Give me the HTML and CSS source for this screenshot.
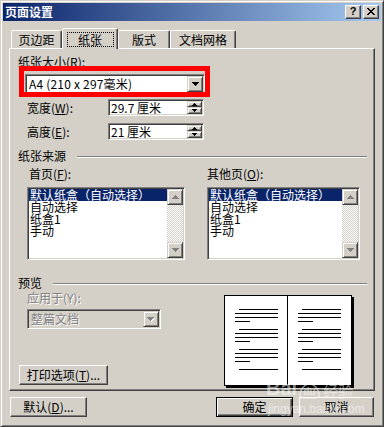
FILE: index.html
```html
<!DOCTYPE html>
<html lang="zh-CN">
<head>
<meta charset="utf-8">
<title>页面设置</title>
<link rel="stylesheet" href="styles.css">
</head>
<body>
<div class="window">
  <div class="titlebar">
    <span class="title">页面设置</span>
    <div class="tbtn"><span class="q">?</span></div>
    <div class="tbtn close">
      <svg width="8" height="7" viewBox="0 0 8 7" shape-rendering="crispEdges"><path d="M0 0h2v1H0zM6 0h2v1H6zM1 1h2v1H1zM5 1h2v1H5zM2 2h4v1H2zM3 3h2v1H3zM2 4h4v1H2zM1 5h2v1H1zM5 5h2v1H5zM0 6h2v1H0zM6 6h2v1H6z"/></svg>
    </div>
  </div>

  <div class="body">
    <div class="tabs">
      <div class="tab t1">页边距</div>
      <div class="tab t2 sel"><span class="focus">纸张</span></div>
      <div class="tab t3">版式</div>
      <div class="tab t4">文档网格</div>
    </div>

    <div class="panel">
      <div class="lbl l-size">纸张大小(<u>R</u>):</div>
      <div class="combo a4 sunken">
        <span class="cval">A4 (210 x 297毫米)</span>
        <div class="cbtn"><svg width="7" height="4" viewBox="0 0 7 4" shape-rendering="crispEdges"><path d="M0 0h7v1H6v1H5v1H4v1H3V3H2V2H1V1H0z"/></svg></div>
      </div>

      <div class="frow first">
        <span class="flbl">宽度(<u>W</u>):</span>
        <div class="spin sunken">
          <span class="sval">29.7 厘米</span>
          <div class="sbtns">
            <div class="sb up"><svg width="5" height="3" viewBox="0 0 5 3" shape-rendering="crispEdges"><path d="M2 0h1v1h1v1h1v1H0V2h1V1h1z"/></svg></div>
            <div class="sb dn"><svg width="5" height="3" viewBox="0 0 5 3" shape-rendering="crispEdges"><path d="M0 0h5v1H4v1H3v1H2V2H1V1H0z"/></svg></div>
          </div>
        </div>
      </div>
      <div class="frow second">
        <span class="flbl">高度(<u>E</u>):</span>
        <div class="spin sunken">
          <span class="sval">21 厘米</span>
          <div class="sbtns">
            <div class="sb up"><svg width="5" height="3" viewBox="0 0 5 3" shape-rendering="crispEdges"><path d="M2 0h1v1h1v1h1v1H0V2h1V1h1z"/></svg></div>
            <div class="sb dn"><svg width="5" height="3" viewBox="0 0 5 3" shape-rendering="crispEdges"><path d="M0 0h5v1H4v1H3v1H2V2H1V1H0z"/></svg></div>
          </div>
        </div>
      </div>

      <div class="group g-src"><span>纸张来源</span><span class="gline"></span></div>

      <div class="src">
        <div class="lbl l-first">首页(<u>F</u>):</div>
        <div class="lbl l-other">其他页(<u>O</u>):</div>
        <div class="list sunken w1">
          <div class="items">
            <div class="item sel">默认纸盒（自动选择）</div>
            <div class="item">自动选择</div>
            <div class="item">纸盒1</div>
            <div class="item">手动</div>
          </div>
          <div class="vscroll">
            <div class="sbtn"><svg width="7" height="4" viewBox="0 0 7 4" shape-rendering="crispEdges"><path d="M3 0h1v1h1v1h1v1h1v1H0V3h1V2h1V1h1z"/></svg></div>
            <div class="track"></div>
            <div class="sbtn"><svg width="7" height="4" viewBox="0 0 7 4" shape-rendering="crispEdges"><path d="M0 0h7v1H6v1H5v1H4v1H3V3H2V2H1V1H0z"/></svg></div>
          </div>
        </div>
        <div class="list sunken w2">
          <div class="items">
            <div class="item sel">默认纸盒（自动选择）</div>
            <div class="item">自动选择</div>
            <div class="item">纸盒1</div>
            <div class="item">手动</div>
          </div>
          <div class="vscroll">
            <div class="sbtn"><svg width="7" height="4" viewBox="0 0 7 4" shape-rendering="crispEdges"><path d="M3 0h1v1h1v1h1v1h1v1H0V3h1V2h1V1h1z"/></svg></div>
            <div class="track"></div>
            <div class="sbtn"><svg width="7" height="4" viewBox="0 0 7 4" shape-rendering="crispEdges"><path d="M0 0h7v1H6v1H5v1H4v1H3V3H2V2H1V1H0z"/></svg></div>
          </div>
        </div>
      </div>

      <div class="group g-prev"><span>预览</span><span class="gline"></span></div>

      <div class="prev">
        <div class="pleft">
          <div class="lbl dis l-apply">应用于(Y):</div>
          <div class="combo dcombo sunken">
            <span class="cval dis">整篇文档</span>
            <div class="cbtn"><svg width="8" height="5" viewBox="0 0 8 5" shape-rendering="crispEdges"><path fill="#fff" d="M1 1h7v1H7v1H6v1H5v1H4V4H3V3H2V2H1z"/><path fill="#808080" d="M0 0h7v1H6v1H5v1H4v1H3V3H2V2H1V1H0z"/></svg></div>
          </div>
          <div class="btn print">打印选项(<u>T</u>)...</div>
        </div>
        <svg class="book" width="130" height="93" viewBox="0 0 130 93" shape-rendering="crispEdges">
          <rect x="2" y="2" width="128" height="91" fill="#000"/>
          <rect x="0.5" y="0.5" width="127" height="90" fill="#fff" stroke="#000"/>
          <line x1="63.5" y1="0" x2="63.5" y2="91" stroke="#000"/>
          <g stroke="#000">
            <line x1="15" y1="14.5" x2="54" y2="14.5"/><line x1="11" y1="18.5" x2="54" y2="18.5"/><line x1="11" y1="22.5" x2="54" y2="22.5"/><line x1="11" y1="26.5" x2="26" y2="26.5"/>
            <line x1="15" y1="34.5" x2="54" y2="34.5"/><line x1="11" y1="38.5" x2="54" y2="38.5"/><line x1="11" y1="42.5" x2="54" y2="42.5"/><line x1="11" y1="46.5" x2="26" y2="46.5"/>
            <line x1="15" y1="54.5" x2="54" y2="54.5"/><line x1="11" y1="58.5" x2="54" y2="58.5"/><line x1="11" y1="62.5" x2="54" y2="62.5"/><line x1="11" y1="66.5" x2="26" y2="66.5"/>
            <line x1="15" y1="74.5" x2="54" y2="74.5"/>
            <line x1="78" y1="14.5" x2="117" y2="14.5"/><line x1="74" y1="18.5" x2="117" y2="18.5"/><line x1="74" y1="22.5" x2="117" y2="22.5"/><line x1="74" y1="26.5" x2="89" y2="26.5"/>
            <line x1="78" y1="34.5" x2="117" y2="34.5"/><line x1="74" y1="38.5" x2="117" y2="38.5"/><line x1="74" y1="42.5" x2="117" y2="42.5"/><line x1="74" y1="46.5" x2="89" y2="46.5"/>
            <line x1="78" y1="54.5" x2="117" y2="54.5"/><line x1="74" y1="58.5" x2="117" y2="58.5"/><line x1="74" y1="62.5" x2="117" y2="62.5"/><line x1="74" y1="66.5" x2="89" y2="66.5"/>
            <line x1="78" y1="74.5" x2="117" y2="74.5"/>
          </g>
        </svg>
      </div>

      <div class="redbox"></div>
    </div>

    <div class="footer">
      <div class="btn b-def">默认(<u>D</u>)...</div>
      <div class="btn b-ok">确定</div>
      <div class="btn b-cancel">取消</div>
    </div>
  </div>

  <div class="wm">
    <div class="wm-top">
      <span class="wm-bai">Bai</span>
      <svg class="wm-paw" width="24" height="26" viewBox="0 0 24 26">
        <g fill="none" stroke="#fff" stroke-width="1.6">
          <ellipse cx="5" cy="6" rx="2.5" ry="3.2"/>
          <ellipse cx="10" cy="3.5" rx="2.5" ry="3"/>
          <ellipse cx="15" cy="3.5" rx="2.5" ry="3"/>
          <ellipse cx="20" cy="6" rx="2.5" ry="3.2"/>
          <path d="M3 22c0-6 5-11 9.5-11S22 16 22 22c0 2-2 3-4 3H7c-2 0-4-1-4-3z"/>
        </g>
        <text x="12.5" y="22" text-anchor="middle" fill="#fff" font-family="Liberation Sans, sans-serif" font-weight="700" font-size="10">du</text>
      </svg>
      <span class="wm-jy">经验</span>
    </div>
    <div class="wm-url">jingyan.baidu.com</div>
  </div>
</div>
</body>
</html>
```

FILE: styles.css
```css
* { box-sizing: border-box; }
html, body { margin: 0; padding: 0; }
body {
  width: 384px;
  height: 427px;
  overflow: hidden;
  font-family: "Noto Sans CJK SC", "Noto Sans", sans-serif;
  font-size: 12px;
  line-height: 12px;
  color: #000;
  background: #d4d0c8;
}
u { text-decoration: underline; text-underline-offset: 1px; }

.sunken {
  border: 1px solid;
  border-color: #808080 #fff #fff #808080;
  box-shadow: inset 1px 1px #404040, inset -1px -1px #d4d0c8;
  padding: 1px;
}

.window {
  position: relative;
  width: 384px;
  height: 427px;
  background: #d4d0c8;
  border: 1px solid;
  border-color: #d4d0c8 #404040 #404040 #d4d0c8;
  box-shadow: inset 1px 1px #fff, inset -1px -1px #808080;
  padding: 2px;
  display: flex;
  flex-direction: column;
}

/* title bar */
.titlebar {
  flex: none;
  height: 18px;
  display: flex;
  align-items: center;
  padding: 0 2px 0 2px;
  background: linear-gradient(to right, #0a246a, #a6caf0);
}
.title {
  flex: 1;
  color: #fff;
  font-weight: 700;
  font-size: 12px;
  line-height: 14px;
}
.tbtn {
  width: 16px;
  height: 14px;
  background: #d4d0c8;
  border: 1px solid;
  border-color: #fff #404040 #404040 #fff;
  box-shadow: inset -1px -1px #808080;
  display: flex;
  align-items: center;
  justify-content: center;
}
.tbtn + .tbtn { margin-left: 2px; }
.q {
  font-family: "Liberation Sans", sans-serif;
  font-weight: 700;
  font-size: 11px;
  line-height: 11px;
  margin-top: -1px;
}
.close svg { display: block; margin-top: -1px; }

/* body */
.body {
  flex: 1;
  display: flex;
  flex-direction: column;
  padding: 7px 6px 0 6px;
}

/* tabs */
.tabs {
  flex: none;
  height: 20px;
  display: flex;
  align-items: flex-end;
  margin-left: 2px;
  position: relative;
  z-index: 2;
}
.tab {
  height: 18px;
  border: 1px solid;
  border-bottom: 0;
  border-color: #fff #404040 transparent #fff;
  box-shadow: inset -1px 0 #808080;
  border-radius: 2px 2px 0 0;
  background: #d4d0c8;
  display: flex;
  align-items: center;
  justify-content: center;
  padding-top: 1px;
}
.t1 { width: 51px; }
.t2 { width: 56px; }
.t3 { width: 52px; }
.t4 { width: 66px; }
.tab.sel {
  height: 21px;
  margin-bottom: -1px;
  align-items: flex-start;
  padding-top: 3px;
}
.focus {
  width: 47px;
  height: 15px;
  border: 1px dotted #000;
  display: flex;
  align-items: center;
  justify-content: center;
}

/* panel */
.panel {
  position: relative;
  flex: none;
  width: 366px;
  height: 343px;
  border: 1px solid;
  border-color: #fff #404040 #404040 #fff;
  box-shadow: inset -1px -1px #808080;
  display: flex;
  flex-direction: column;
  align-items: flex-start;
}
.lbl { line-height: 12px; white-space: nowrap; }
.dis { color: #808080; text-shadow: 1px 1px 0 #fff; }
.l-size { margin: 7px 0 0 8px; }

.combo {
  height: 20px;
  background: #fff;
  display: flex;
  align-items: center;
}
.a4 { width: 180px; margin: 6px 0 0 15px; }
.cval { flex: 1; padding-left: 2px; white-space: nowrap; }
.a4 .cval { letter-spacing: 0.2px; }
.cbtn {
  width: 16px;
  height: 16px;
  border: 1px solid;
  border-color: #d4d0c8 #404040 #404040 #d4d0c8;
  box-shadow: inset 1px 1px #fff, inset -1px -1px #808080;
  background: #d4d0c8;
  display: flex;
  align-items: center;
  justify-content: center;
}
.cbtn svg { display: block; }

.frow {
  display: flex;
  align-items: center;
  margin-left: 17px;
}
.frow.first { margin-top: 5px; }
.frow.second { margin-top: 7px; }
.flbl { width: 81px; white-space: nowrap; }
.spin {
  width: 96px;
  height: 17px;
  background: #fff;
  display: flex;
  align-items: center;
}
.sval { flex: 1; padding-left: 1px; white-space: nowrap; }
.sbtns {
  width: 15px;
  height: 13px;
  display: flex;
  flex-direction: column;
}
.sb {
  flex: 1;
  border: 1px solid;
  border-color: #d4d0c8 #404040 #404040 #d4d0c8;
  box-shadow: inset 1px 1px #fff, inset -1px -1px #808080;
  background: #d4d0c8;
  display: flex;
  align-items: center;
  justify-content: center;
}
.sb.up { flex: 0 0 6px; }
.sb.dn { flex: 0 0 7px; }
.sb svg { display: block; flex: none; }

/* group headers */
.group {
  display: flex;
  align-self: stretch;
  height: 12px;
  margin-left: 8px;
  white-space: nowrap;
}
.gline {
  flex: 1;
  height: 2px;
  margin: 6px 7px 0 11px;
  border-top: 1px solid #808080;
  border-bottom: 1px solid #fff;
}
.g-src { margin-top: 10px; }
.g-prev { margin-top: 17px; }

/* paper source */
.src {
  margin: 6px 0 0 17px;
  display: grid;
  grid-template-columns: 180px 153px;
  row-gap: 7px;
}
.l-first { padding-left: 2px; }
.list {
  height: 73px;
  background: #fff;
  display: flex;
}
.list.w1 { width: 158px; }
.list.w2 { width: 153px; }
.items { flex: 1; min-width: 0; }
.item {
  height: 12px;
  line-height: 12px;
  padding-left: 1px;
  white-space: nowrap;
}
.item.sel { background: #0a246a; color: #fff; }
.vscroll {
  width: 16px;
  display: flex;
  flex-direction: column;
}
.sbtn {
  flex: 0 0 16px;
  border: 1px solid;
  border-color: #d4d0c8 #404040 #404040 #d4d0c8;
  box-shadow: inset 1px 1px #fff, inset -1px -1px #808080;
  background: #d4d0c8;
  display: flex;
  align-items: center;
  justify-content: center;
}
.sbtn svg { display: block; fill: #808080; }
.track {
  flex: 1;
  background: repeating-conic-gradient(#d4d0c8 0 25%, #fff 0 50%) 0 0 / 2px 2px;
}

/* preview */
.prev {
  display: flex;
  margin-left: 9px;
}
.pleft {
  width: 205px;
  display: flex;
  flex-direction: column;
  align-items: flex-start;
}
.l-apply { margin: 3px 0 0 8px; }
.dcombo {
  width: 134px;
  margin: 5px 0 0 8px;
  background: #d4d0c8;
}
.dcombo .cval { padding-left: 2px; }
.book { display: block; margin-top: 6px; }

.btn {
  height: 20px;
  border: 1px solid;
  border-color: #fff #404040 #404040 #fff;
  box-shadow: inset -1px -1px #808080;
  background: #d4d0c8;
  display: flex;
  align-items: center;
  justify-content: center;
  white-space: nowrap;
}
.print { width: 89px; margin-top: 36px; }

.redbox {
  position: absolute;
  left: 9px;
  top: 17px;
  width: 191px;
  height: 31px;
  border: 5px solid #f00;
}

/* footer */
.footer {
  flex: none;
  display: flex;
  margin-top: 6px;
}
.b-def { width: 77px; margin-left: 1px; }
.b-ok {
  width: 77px;
  margin-left: auto;
  border: 1px solid #000;
  box-shadow: inset 1px 1px #fff, inset -1px -1px #404040, inset -2px -2px #808080;
}
.b-cancel { width: 75px; margin-left: 6px; margin-right: 1px; }

/* watermark */
.wm {
  position: absolute;
  left: 265px;
  top: 371px;
  opacity: 0.5;
  color: #fff;
  pointer-events: none;
}
.wm-top { display: flex; align-items: flex-end; height: 27px; }
.wm-bai {
  font-family: "Liberation Sans", sans-serif;
  font-weight: 700;
  font-size: 20px;
  line-height: 20px;
  margin-bottom: 1px;
}
.wm-paw { display: block; }
.wm-jy { font-size: 15px; line-height: 15px; margin: 0 0 1px 2px; }
.wm-url {
  font-family: "Liberation Sans", sans-serif;
  font-size: 12px;
  line-height: 13px;
  margin: 4px 0 0 2px;
}
```
